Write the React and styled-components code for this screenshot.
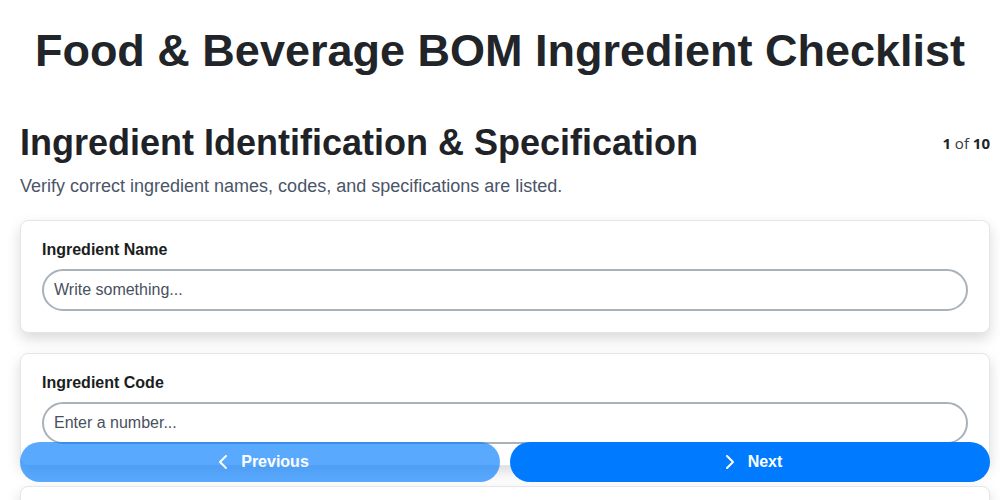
import React from 'react'
import styled, { createGlobalStyle } from 'styled-components'
import { ChevronLeft, ChevronRight } from 'lucide-react'

const fields = [
  { label: 'Ingredient Name', placeholder: 'Write something...', type: 'text' },
  { label: 'Ingredient Code', placeholder: 'Enter a number...', type: 'number' },
  { label: 'Specification', placeholder: 'Write something...', type: 'text' },
]

export default function App() {
  return (
    <>
      <GlobalStyle />
      <Title>Food &amp; Beverage BOM Ingredient Checklist</Title>

      <Page>
        <HeadRow>
          <Heading>Ingredient Identification &amp; Specification</Heading>
          <Counter><b>1</b> of <b>10</b></Counter>
        </HeadRow>
        <Sub>Verify correct ingredient names, codes, and specifications are listed.</Sub>

        <Cards>
          {fields.map((f) => (
            <Card key={f.label}>
              <Label>{f.label}</Label>
              <Input type={f.type} placeholder={f.placeholder} />
            </Card>
          ))}
        </Cards>
      </Page>

      <Nav>
        <NavButton $faded>
          <ChevronLeft size={24} strokeWidth={2} />
          Previous
        </NavButton>
        <NavButton>
          <ChevronRight size={24} strokeWidth={2} />
          Next
        </NavButton>
      </Nav>
    </>
  )
}

const GlobalStyle = createGlobalStyle`
  body {
    margin: 0;
    background: #fff;
    font-family: "Liberation Sans", Arial, sans-serif;
    color: #212529;
  }
`

const Title = styled.h1`
  margin: 25px 0 0;
  font-size: 45px;
  font-weight: 700;
  text-align: center;
  color: #212529;
`

const Page = styled.main`
  padding: 0 10px 80px 20px;
`

const HeadRow = styled.div`
  display: flex;
  justify-content: space-between;
  align-items: center;
  margin-top: 45px;
`

const Heading = styled.h2`
  margin: 0;
  font-size: 36px;
  font-weight: 700;
  color: #1f2328;
`

const Counter = styled.span`
  font-family: "Open Sans", sans-serif;
  font-size: 15px;
  color: #343a40;
  b {
    color: #1f2328;
  }
`

const Sub = styled.p`
  margin: 12px 0 0;
  font-size: 18px;
  color: #4a5568;
`

const Cards = styled.div`
  display: flex;
  flex-direction: column;
  gap: 20px;
  margin-top: 23px;
`

const Card = styled.section`
  padding: 20px 21px 21px;
  background: #fff;
  border: 1px solid #e4e6eb;
  border-radius: 8px;
  box-shadow: 0 6px 14px rgba(0, 0, 0, 0.15);
`

const Label = styled.label`
  display: block;
  font-size: 16px;
  font-weight: 700;
  color: #1a1d21;
  margin-bottom: 10px;
`

const Input = styled.input`
  box-sizing: border-box;
  width: 100%;
  height: 42px;
  padding: 0 10px;
  border: 2px solid #a9b1bb;
  border-radius: 21px;
  font-family: "Liberation Sans", Arial, sans-serif;
  font-size: 16px;
  color: #212529;
  outline: none;
  &::placeholder {
    color: #4a5060;
  }
  &::-webkit-inner-spin-button {
    display: none;
  }
`

const Nav = styled.nav`
  position: fixed;
  left: 20px;
  right: 10px;
  bottom: 18px;
  display: grid;
  grid-template-columns: 1fr 1fr;
  gap: 10px;
`

const NavButton = styled.button`
  display: flex;
  align-items: center;
  justify-content: center;
  gap: 6px;
  height: 40px;
  border: none;
  border-radius: 20px;
  background: #007bff;
  color: #fff;
  font-family: "Liberation Sans", Arial, sans-serif;
  font-size: 16px;
  font-weight: 700;
  opacity: ${(p) => (p.$faded ? 0.65 : 1)};
  cursor: pointer;
`
